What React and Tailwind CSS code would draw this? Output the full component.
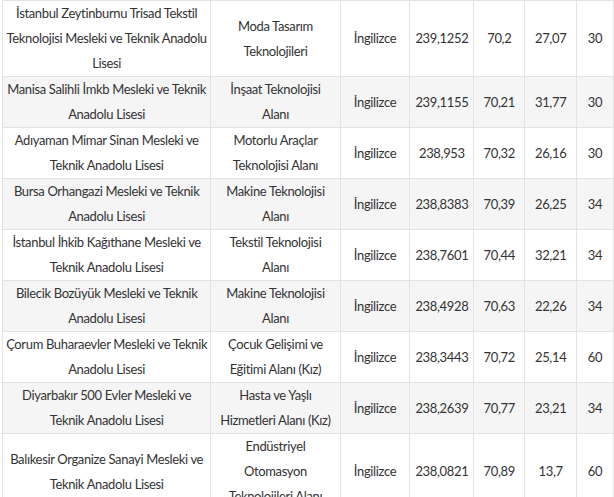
const rows = [
  ["İstanbul Zeytinburnu Trisad Tekstil Teknolojisi Mesleki ve Teknik Anadolu Lisesi", "Moda Tasarım Teknolojileri", "İngilizce", "239,1252", "70,2", "27,07", "30"],
  ["Manisa Salihli İmkb Mesleki ve Teknik Anadolu Lisesi", "İnşaat Teknolojisi Alanı", "İngilizce", "239,1155", "70,21", "31,77", "30"],
  ["Adıyaman Mimar Sinan Mesleki ve Teknik Anadolu Lisesi", "Motorlu Araçlar Teknolojisi Alanı", "İngilizce", "238,953", "70,32", "26,16", "30"],
  ["Bursa Orhangazi Mesleki ve Teknik Anadolu Lisesi", "Makine Teknolojisi Alanı", "İngilizce", "238,8383", "70,39", "26,25", "34"],
  ["İstanbul İhkib Kağıthane Mesleki ve Teknik Anadolu Lisesi", "Tekstil Teknolojisi Alanı", "İngilizce", "238,7601", "70,44", "32,21", "34"],
  ["Bilecik Bozüyük Mesleki ve Teknik Anadolu Lisesi", "Makine Teknolojisi Alanı", "İngilizce", "238,4928", "70,63", "22,26", "34"],
  ["Çorum Buharaevler Mesleki ve Teknik Anadolu Lisesi", "Çocuk Gelişimi ve Eğitimi Alanı (Kız)", "İngilizce", "238,3443", "70,72", "25,14", "60"],
  ["Diyarbakır 500 Evler Mesleki ve Teknik Anadolu Lisesi", "Hasta ve Yaşlı Hizmetleri Alanı (Kız)", "İngilizce", "238,2639", "70,77", "23,21", "34"],
  ["Balıkesir Organize Sanayi Mesleki ve Teknik Anadolu Lisesi", "Endüstriyel Otomasyon Teknolojileri Alanı", "İngilizce", "238,0821", "70,89", "13,7", "60"],
];

const widths = ["w-[210px]", "w-[130px]", "w-[70px]", "w-[60px]", "w-[51px]", "w-[52px]", "w-[37px]"];

export default function App() {
  return (
    <div className="h-[497px] w-[614px] overflow-hidden bg-white pl-[2px]">
      <table
        className="table-fixed border-collapse text-[13px] leading-[25px] tracking-[-0.35px] text-[#333]"
        style={{ fontFamily: "Lato, 'Noto Sans', sans-serif" }}
      >
        <colgroup>
          {widths.map((w, i) => (
            <col key={i} className={w} />
          ))}
        </colgroup>
        <tbody>
          {rows.map((r, i) => (
            <tr key={i} className={i % 2 === 1 ? "bg-[#f5f5f5]" : "bg-white"}>
              {r.map((c, j) => (
                <td
                  key={j}
                  className={
                    "border border-[#e3e3e3] py-0 text-center align-middle " +
                    (j === 0 ? "px-[3px]" : "px-[5px]")
                  }
                >
                  {c}
                </td>
              ))}
            </tr>
          ))}
        </tbody>
      </table>
    </div>
  );
}
